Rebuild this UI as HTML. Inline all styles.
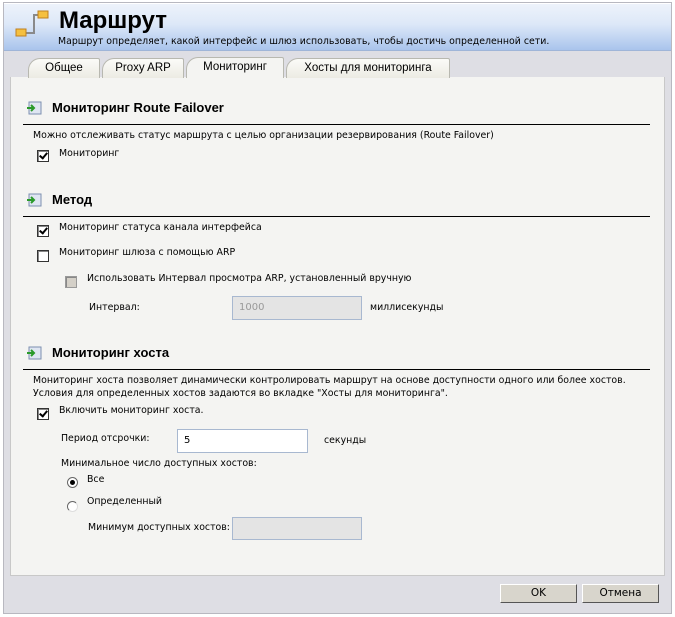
<!DOCTYPE html>
<html><head><meta charset="utf-8"><style>
*{margin:0;padding:0;box-sizing:border-box}
body{width:675px;height:617px;background:#fff;position:relative;overflow:hidden;font-family:"DejaVu Sans","Liberation Sans",sans-serif;font-size:9.4px;color:#000}
.a{position:absolute;white-space:nowrap}
#outer{position:absolute;left:3px;top:2px;width:669px;height:612px;background:#dedee4;border:1px solid #b8b8c0}
#hdr{position:absolute;left:4px;top:3px;width:667px;height:48px;background:linear-gradient(#eef3fb,#dde8f8 45%,#a9c4ec);border-bottom:1px solid #9fb5d8;box-shadow:inset 0 1px 0 #fff}
#panel{position:absolute;left:10px;top:77px;width:655px;height:499px;background:#f4f4f2;border:1px solid #c8c8c8;border-top:none}
.tab{position:absolute;top:58px;height:20px;background:linear-gradient(#fbfbf8,#ecebe3);border:1px solid #b8b8b0;border-bottom:none;border-radius:12px 2px 0 0;font-family:"Liberation Sans",sans-serif;font-size:11.5px;text-align:center;line-height:19px}
.h{font-family:"Liberation Sans",sans-serif;font-weight:bold;font-size:13px}
.ln{position:absolute;left:23px;width:627px;height:1px;background:#000}
.cb{position:absolute;width:12px;height:12px;border:1px solid #333;background:#fff;box-shadow:inset 1px 1px 0 #888}
.cb.k::after{content:"";position:absolute;left:3px;top:0px;width:3px;height:6px;border:solid #000;border-width:0 2px 2px 0;transform:rotate(40deg)}
.inp{position:absolute;height:24px;border:1px solid #a8b8d0;background:#fff;padding:5px 6px;font-size:10px}
.ic{position:absolute;width:16px;height:14px}
.btn{position:absolute;top:584px;width:77px;height:19px;background:#d8d5cc;border:1px solid;border-color:#fff #555 #555 #fff;font-size:10.5px;text-align:center;line-height:17px}
</style></head><body>
<div id="outer"></div>
<div id="hdr"></div>
<svg class="a" style="left:14px;top:8px" width="38" height="30" viewBox="0 0 38 30">
<path d="M28 7 H20 V25 H8" fill="none" stroke="#8a8a8a" stroke-width="2"/>
<rect x="24" y="3" width="10" height="7" fill="#f5c040" stroke="#c08020"/>
<rect x="2" y="21" width="10" height="7" fill="#f5c040" stroke="#c08020"/>
</svg>
<div class="a" style="left:59px;top:7px;font-family:'Liberation Sans',sans-serif;font-weight:bold;font-size:24px">Маршрут</div>
<div class="a" style="left:58px;top:36px">Маршрут определяет, какой интерфейс и шлюз использовать, чтобы достичь определенной сети.</div>
<div id="panel"></div>
<div class="tab" style="left:28px;width:72px">Общее</div>
<div class="tab" style="left:102px;width:82px">Proxy ARP</div>
<div class="tab" style="left:186px;width:98px;top:57px;height:21px;background:#f4f4f2;z-index:2">Мониторинг</div>
<div class="tab" style="left:286px;width:164px">Хосты для мониторинга</div>

<svg class="ic" style="left:26px;top:101px" viewBox="0 0 16 14"><rect x="3" y="1" width="12" height="12" fill="#dfe6f2" stroke="#7d8fb0"/><path d="M1 7h6M5 4l3 3-3 3" stroke="#2a9a2a" stroke-width="2" fill="none"/></svg>
<div class="a h" style="left:52px;top:100px">Мониторинг Route Failover</div>
<div class="ln" style="top:124px"></div>
<div class="a" style="left:33px;top:130px">Можно отслеживать статус маршрута с целью организации резервирования (Route Failover)</div>
<div class="cb k" style="left:37px;top:150px"></div>
<div class="a" style="left:59px;top:148px">Мониторинг</div>

<svg class="ic" style="left:26px;top:193px" viewBox="0 0 16 14"><rect x="3" y="1" width="12" height="12" fill="#dfe6f2" stroke="#7d8fb0"/><path d="M1 7h6M5 4l3 3-3 3" stroke="#2a9a2a" stroke-width="2" fill="none"/></svg>
<div class="a h" style="left:52px;top:192px">Метод</div>
<div class="ln" style="top:216px"></div>
<div class="cb k" style="left:37px;top:225px"></div>
<div class="a" style="left:59px;top:222px">Мониторинг статуса канала интерфейса</div>
<div class="cb" style="left:37px;top:250px"></div>
<div class="a" style="left:59px;top:247px">Мониторинг шлюза с помощью ARP</div>
<div class="cb" style="left:65px;top:276px;background:#d4d0c8;border-color:#999"></div>
<div class="a" style="left:87px;top:273px">Использовать Интервал просмотра ARP, установленный вручную</div>
<div class="a" style="left:89px;top:302px">Интервал:</div>
<div class="inp" style="left:232px;top:296px;width:130px;background:#e4e4e4;color:#999">1000</div>
<div class="a" style="left:370px;top:302px">миллисекунды</div>

<svg class="ic" style="left:26px;top:346px" viewBox="0 0 16 14"><rect x="3" y="1" width="12" height="12" fill="#dfe6f2" stroke="#7d8fb0"/><path d="M1 7h6M5 4l3 3-3 3" stroke="#2a9a2a" stroke-width="2" fill="none"/></svg>
<div class="a h" style="left:52px;top:345px">Мониторинг хоста</div>
<div class="ln" style="top:369px"></div>
<div class="a" style="left:33px;top:375px">Мониторинг хоста позволяет динамически контролировать маршрут на основе доступности одного или более хостов.</div>
<div class="a" style="left:33px;top:388px">Условия для определенных хостов задаются во вкладке "Хосты для мониторинга".</div>
<div class="cb k" style="left:37px;top:408px"></div>
<div class="a" style="left:59px;top:405px">Включить мониторинг хоста.</div>
<div class="a" style="left:61px;top:433px">Период отсрочки:</div>
<div class="inp" style="left:177px;top:429px;width:131px">5</div>
<div class="a" style="left:324px;top:435px">секунды</div>
<div class="a" style="left:61px;top:458px">Минимальное число доступных хостов:</div>
<div class="a" style="left:67px;top:477px;width:11px;height:11px;border-radius:50%;background:#fff;border:1px solid #666"><div style="position:absolute;left:2px;top:2px;width:5px;height:5px;border-radius:50%;background:#000"></div></div>
<div class="a" style="left:87px;top:474px">Все</div>
<div class="a" style="left:67px;top:501px;width:11px;height:11px;border-radius:50%;background:#fff;border:1px solid #666;border-right-color:#ddd;border-bottom-color:#ddd"></div>
<div class="a" style="left:87px;top:496px">Определенный</div>
<div class="a" style="left:88px;top:522px">Минимум доступных хостов:</div>
<div class="inp" style="left:232px;top:517px;width:130px;height:23px;background:#e4e4e4"></div>

<div class="btn" style="left:500px">OK</div>
<div class="btn" style="left:582px">Отмена</div>
</body></html>
